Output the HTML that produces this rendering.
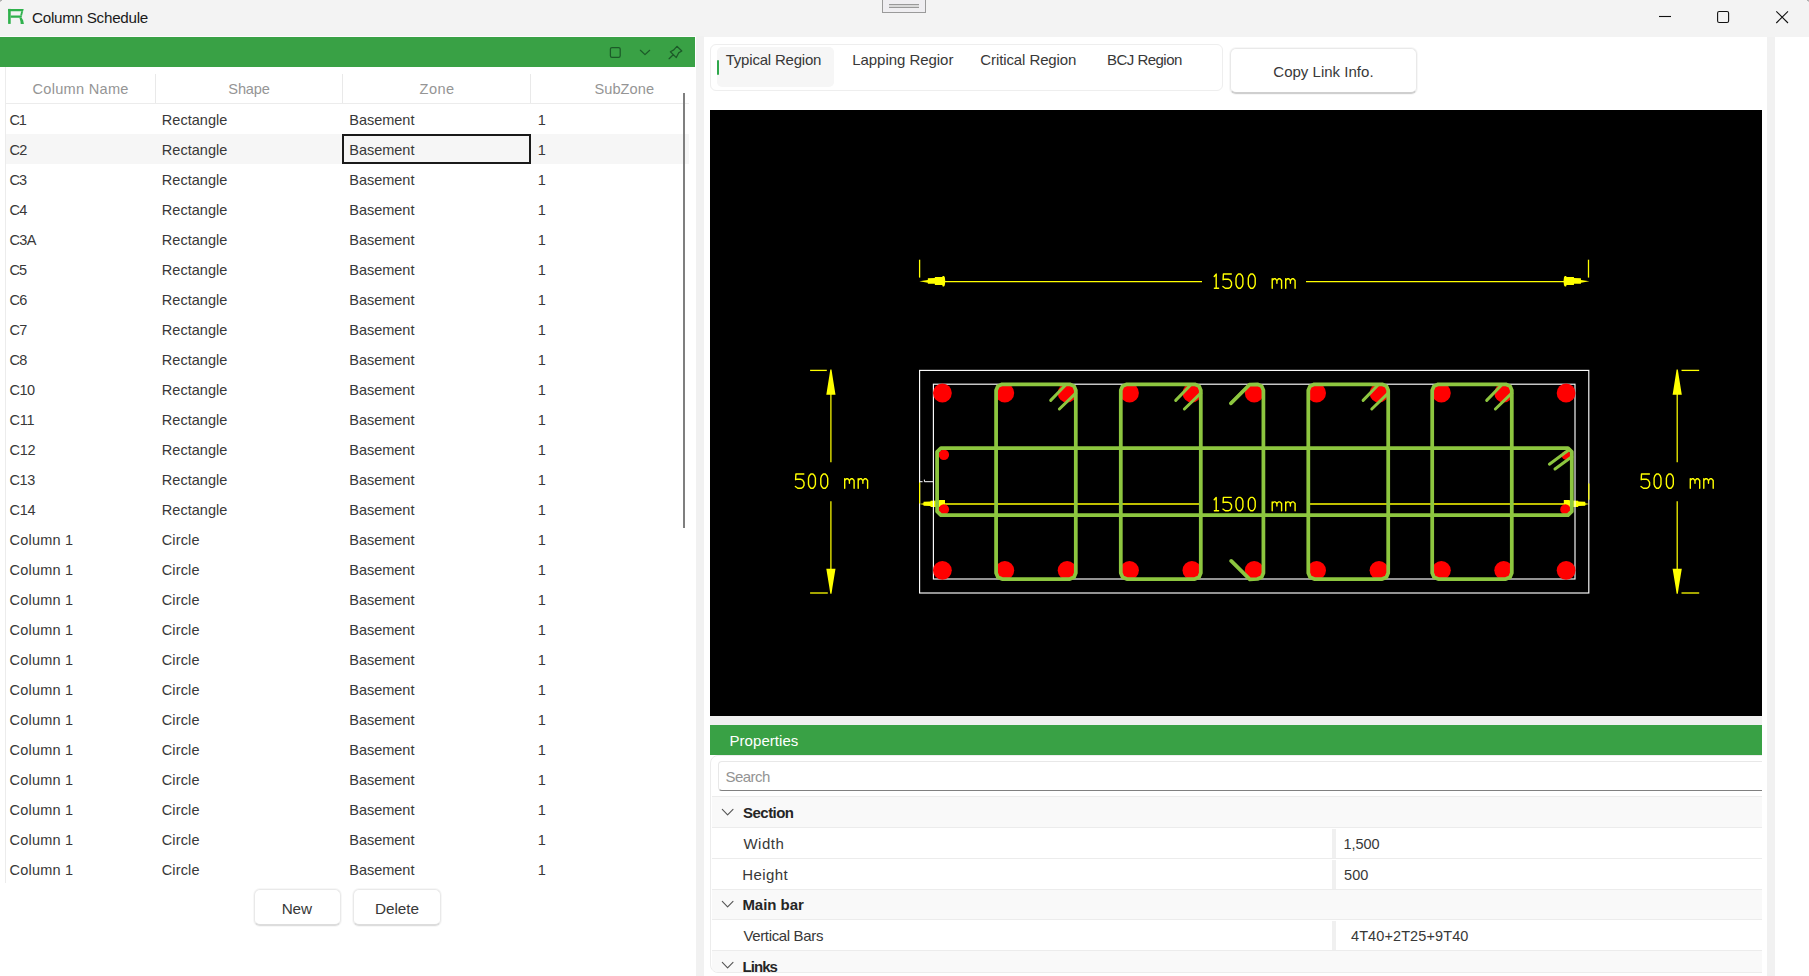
<!DOCTYPE html>
<html><head><meta charset="utf-8"><title>Column Schedule</title>
<style>
*{box-sizing:border-box;margin:0;padding:0}
html,body{width:1809px;height:976px;overflow:hidden;background:#fff;font-family:"Liberation Sans",sans-serif;font-size:14px;color:#1f1f1f}
.abs{position:absolute}
.tx{position:absolute;white-space:nowrap}
#title{left:0;top:0;width:1809px;height:37px;background:#f3f3f3}
#gbar{left:0;top:37px;width:695px;height:30px;background:#39a145}
#div1{left:696px;top:36px;width:8px;height:940px;background:#f1f1f1}
#div2{left:1767px;top:37px;width:8px;height:939px;background:#f1f1f1}
#cad{left:710px;top:110px;width:1052px;height:606px;background:#000}
#pband{left:710px;top:716px;width:1052px;height:9px;background:#f0f0f0}
#phead{left:710px;top:725px;width:1052px;height:30px;background:#39a145}
.vsep{width:1px;background:#e9e9e9;top:74px;height:29px}
.btn{background:#fff;border:1px solid #e9e9e9;border-bottom:2px solid #dddddd;border-radius:6px;box-shadow:0 0 0 1px #f7f7f7}
.prow{left:1px;width:1080px;border-top:1px solid #ececec}
.pg{background:#f9f9f9}
.psplit{left:621px;width:4px;background:#f0f0f0}
</style></head><body>
<div class="abs" id="title"></div>
<div class="abs" style="left:1807px;top:0;width:2px;height:1px;background:#b0b0b0"></div><div class="abs" style="left:1808px;top:1px;width:1px;height:1px;background:#c8c8c8"></div><div class="abs" style="left:0;top:0;width:2px;height:1px;background:#b0b0b0"></div><div class="abs" style="left:0;top:1px;width:1px;height:1px;background:#c8c8c8"></div>
<!-- logo -->
<svg class="abs" style="left:0;top:0" width="40" height="37" viewBox="0 0 40 37">
<g fill="#2fb14c"><polygon points="8.1,8.9 23.7,8.9 23.1,11.3 8.1,11.3"/><rect x="8.1" y="8.9" width="2.6" height="15"/>
<polygon points="10.7,15.4 22.1,15.4 21.5,17.8 10.7,17.8"/><polygon points="21.2,11.3 23.1,11.3 22.1,15.4 20.2,15.4"/>
<polygon points="19.4,17.8 21.7,17.8 23.2,20.6 23.9,23.9 20.7,23.9 20.4,21.2"/></g></svg>
<!-- top handle -->
<div class="abs" style="left:882px;top:-1px;width:44px;height:14px;background:#efeef1;border:1px solid #9a9a9a"></div>
<div class="abs" style="left:889px;top:4px;width:30px;height:4px;background:#d9d9d9;border-top:1px solid #999;border-bottom:1px solid #999"></div>
<!-- window buttons -->
<svg class="abs" style="left:1640px;top:0" width="169" height="37" viewBox="1640 0 169 37" fill="none" stroke="#111" stroke-width="1.1">
<line x1="1659" y1="16.5" x2="1671" y2="16.5"/>
<rect x="1717.6" y="11.5" width="11" height="11" rx="1.6"/>
<path d="M1776.3 11.3 L1788 23 M1788 11.3 L1776.3 23"/></svg>
<div class="abs" style="left:0;top:36px;width:696px;height:1px;background:#fcfcfc"></div>
<div class="abs" id="gbar"></div>
<svg class="abs" style="left:600px;top:37px" width="95" height="30" viewBox="600 37 95 30" fill="none" stroke="#1c5a28" stroke-width="1.25" stroke-linecap="round" stroke-linejoin="round">
<rect x="610.4" y="47.5" width="9.8" height="9.8" rx="1.6"/>
<path d="M640.4 50.3 L645 54.6 L649.7 50.3"/>
<path d="M676.9 46.3 L681.8 51 L678.6 52.9 L676.3 57.6 L670.4 51.7 L673.8 49.9 Z M673.2 54.7 L669.1 58.7"/></svg>
<!-- left table -->
<div class="abs" style="left:5px;top:67px;width:1px;height:816px;background:#ececec"></div>
<div class="abs" style="left:6px;top:103px;width:683px;height:1px;background:#ececec"></div>
<div class="abs vsep" style="left:155px"></div><div class="abs vsep" style="left:342px"></div><div class="abs vsep" style="left:530px"></div>
<div class="abs" style="left:6px;top:134px;width:683px;height:30px;background:#f6f6f6"></div>
<div class="abs" style="left:342px;top:134px;width:189px;height:30px;border:2px solid #1a1a1a"></div>
<div class="abs" style="left:683px;top:93px;width:2px;height:435px;background:#7f7f7f"></div>
<div class="abs btn" style="left:253.5px;top:889.3px;width:87px;height:36.5px"></div>
<div class="abs btn" style="left:353px;top:889.3px;width:87.5px;height:36.5px"></div>
<div class="abs" id="div1"></div>
<div class="abs" id="div2"></div>
<!-- tabs -->
<div class="abs" style="left:710px;top:44px;width:513px;height:47px;border:1px solid #eeeeee;border-radius:6px"></div>
<div class="abs" style="left:717px;top:47px;width:117px;height:40px;background:#f6f6f6;border-radius:5px"></div>
<div class="abs" style="left:717px;top:60px;width:2.4px;height:15px;background:#2fa84b;border-radius:1.2px"></div>
<div class="abs btn" style="left:1229.5px;top:47.5px;width:187.5px;height:46px;border-bottom-color:#cfcfcf"></div>
<div class="abs" id="cad"></div>
<svg class="abs" style="left:0;top:0" width="1809" height="976" viewBox="0 0 1809 976"><line x1="919.6" y1="259.7" x2="919.6" y2="277.6" stroke="#ffff00" stroke-width="1.3" />
<line x1="1588.5" y1="259.7" x2="1588.5" y2="277.6" stroke="#ffff00" stroke-width="1.3" />
<line x1="945" y1="281.6" x2="1202" y2="281.6" stroke="#ffff00" stroke-width="1.3" />
<line x1="1306" y1="281.6" x2="1564" y2="281.6" stroke="#ffff00" stroke-width="1.3" />
<polygon points="919.4,281.2 927.8,279.9 927.9,278.2 934.8,278.09999999999997 934.9,277.09999999999997 942.1999999999999,277.0 942.6999999999999,275.9 944.0,275.9 944.8,277.2 945.3,281.2 944.8,285.2 944.0,286.5 942.6999999999999,286.5 942.1999999999999,285.09999999999997 934.9,285.0 934.8,283.8 927.9,283.7 927.8,282.7" fill="#ffff00"/>
<polygon points="1589.4,281.2 1581.0,279.9 1580.9,278.2 1574.0,278.09999999999997 1573.9,277.09999999999997 1566.6000000000001,277.0 1566.1000000000001,275.9 1564.8000000000002,275.9 1564.0,277.2 1563.5,281.2 1564.0,285.2 1564.8000000000002,286.5 1566.1000000000001,286.5 1566.6000000000001,285.09999999999997 1573.9,285.0 1574.0,283.8 1580.9,283.7 1581.0,282.7" fill="#ffff00"/>
<path transform="translate(1210.20,273.50) scale(1,1)" d="M4 3 L6 .6 L6 14.8 M4.2 14.8 L8.4 14.8" stroke="#ffff00" stroke-width="1.4" fill="none" stroke-linejoin="round" stroke-linecap="round"/>
<path transform="translate(1222.50,273.50) scale(1,1)" d="M8.8 .5 L.9 .5 L.6 6.2 L2.2 5.7 L5.6 5.7 L7.6 6.6 L9 8.8 L9 11.8 L7.8 13.8 L6 14.8 L2.8 14.8 L.4 13" stroke="#ffff00" stroke-width="1.4" fill="none" stroke-linejoin="round" stroke-linecap="round"/>
<path transform="translate(1234.80,273.50) scale(1,1)" d="M3.6 .5 L5.7 .5 L7.3 2.2 L8.1 4.6 L8.1 10.7 L7.3 13.1 L5.7 14.8 L3.6 14.8 L2 13.1 L1.2 10.7 L1.2 4.6 L2 2.2 Z" stroke="#ffff00" stroke-width="1.4" fill="none" stroke-linejoin="round" stroke-linecap="round"/>
<path transform="translate(1247.10,273.50) scale(1,1)" d="M3.6 .5 L5.7 .5 L7.3 2.2 L8.1 4.6 L8.1 10.7 L7.3 13.1 L5.7 14.8 L3.6 14.8 L2 13.1 L1.2 10.7 L1.2 4.6 L2 2.2 Z" stroke="#ffff00" stroke-width="1.4" fill="none" stroke-linejoin="round" stroke-linecap="round"/>
<path transform="translate(1271.70,273.50) scale(1,1)" d="M.5 14.8 L.5 5.3 M.5 7 L2.2 5.3 L3.6 5.3 L5.2 7 L5.2 9.8 M5.2 7 L6.9 5.3 L8.3 5.3 L9.9 7 L9.9 14.8" stroke="#ffff00" stroke-width="1.4" fill="none" stroke-linejoin="round" stroke-linecap="round"/>
<path transform="translate(1285.20,273.50) scale(1,1)" d="M.5 14.8 L.5 5.3 M.5 7 L2.2 5.3 L3.6 5.3 L5.2 7 L5.2 9.8 M5.2 7 L6.9 5.3 L8.3 5.3 L9.9 7 L9.9 14.8" stroke="#ffff00" stroke-width="1.4" fill="none" stroke-linejoin="round" stroke-linecap="round"/>
<line x1="830.9" y1="394" x2="830.9" y2="462.3" stroke="#ffff00" stroke-width="1.25" />
<line x1="830.9" y1="501.2" x2="830.9" y2="570" stroke="#ffff00" stroke-width="1.25" />
<polygon points="830.3,369.4 831.5,369.4 832.5,376 835.5,394.8 826.3,394.8 829.3,376" fill="#ffff00"/>
<polygon points="830.3,593.8 831.5,593.8 832.5,587 835.5,568.8 826.3,568.8 829.3,587" fill="#ffff00"/>
<line x1="810.1" y1="370.4" x2="826.8" y2="370.4" stroke="#ffff00" stroke-width="1.3" />
<line x1="810.1" y1="593.0" x2="827.8" y2="593.0" stroke="#ffff00" stroke-width="1.3" />
<line x1="1677.2" y1="394" x2="1677.2" y2="462.3" stroke="#ffff00" stroke-width="1.25" />
<line x1="1677.2" y1="501.2" x2="1677.2" y2="570" stroke="#ffff00" stroke-width="1.25" />
<polygon points="1676.6000000000001,369.4 1677.8,369.4 1678.8,376 1681.8,394.8 1672.6000000000001,394.8 1675.6000000000001,376" fill="#ffff00"/>
<polygon points="1676.6000000000001,593.8 1677.8,593.8 1678.8,587 1681.8,568.8 1672.6000000000001,568.8 1675.6000000000001,587" fill="#ffff00"/>
<line x1="1681.5" y1="370.4" x2="1699.2" y2="370.4" stroke="#ffff00" stroke-width="1.3" />
<line x1="1681.5" y1="593.0" x2="1699.2" y2="593.0" stroke="#ffff00" stroke-width="1.3" />
<path transform="translate(795.00,473.50) scale(1,1)" d="M8.8 .5 L.9 .5 L.6 6.2 L2.2 5.7 L5.6 5.7 L7.6 6.6 L9 8.8 L9 11.8 L7.8 13.8 L6 14.8 L2.8 14.8 L.4 13" stroke="#ffff00" stroke-width="1.4" fill="none" stroke-linejoin="round" stroke-linecap="round"/>
<path transform="translate(807.30,473.50) scale(1,1)" d="M3.6 .5 L5.7 .5 L7.3 2.2 L8.1 4.6 L8.1 10.7 L7.3 13.1 L5.7 14.8 L3.6 14.8 L2 13.1 L1.2 10.7 L1.2 4.6 L2 2.2 Z" stroke="#ffff00" stroke-width="1.4" fill="none" stroke-linejoin="round" stroke-linecap="round"/>
<path transform="translate(819.60,473.50) scale(1,1)" d="M3.6 .5 L5.7 .5 L7.3 2.2 L8.1 4.6 L8.1 10.7 L7.3 13.1 L5.7 14.8 L3.6 14.8 L2 13.1 L1.2 10.7 L1.2 4.6 L2 2.2 Z" stroke="#ffff00" stroke-width="1.4" fill="none" stroke-linejoin="round" stroke-linecap="round"/>
<path transform="translate(844.20,473.50) scale(1,1)" d="M.5 14.8 L.5 5.3 M.5 7 L2.2 5.3 L3.6 5.3 L5.2 7 L5.2 9.8 M5.2 7 L6.9 5.3 L8.3 5.3 L9.9 7 L9.9 14.8" stroke="#ffff00" stroke-width="1.4" fill="none" stroke-linejoin="round" stroke-linecap="round"/>
<path transform="translate(857.70,473.50) scale(1,1)" d="M.5 14.8 L.5 5.3 M.5 7 L2.2 5.3 L3.6 5.3 L5.2 7 L5.2 9.8 M5.2 7 L6.9 5.3 L8.3 5.3 L9.9 7 L9.9 14.8" stroke="#ffff00" stroke-width="1.4" fill="none" stroke-linejoin="round" stroke-linecap="round"/>
<path transform="translate(1640.60,473.50) scale(1,1)" d="M8.8 .5 L.9 .5 L.6 6.2 L2.2 5.7 L5.6 5.7 L7.6 6.6 L9 8.8 L9 11.8 L7.8 13.8 L6 14.8 L2.8 14.8 L.4 13" stroke="#ffff00" stroke-width="1.4" fill="none" stroke-linejoin="round" stroke-linecap="round"/>
<path transform="translate(1652.90,473.50) scale(1,1)" d="M3.6 .5 L5.7 .5 L7.3 2.2 L8.1 4.6 L8.1 10.7 L7.3 13.1 L5.7 14.8 L3.6 14.8 L2 13.1 L1.2 10.7 L1.2 4.6 L2 2.2 Z" stroke="#ffff00" stroke-width="1.4" fill="none" stroke-linejoin="round" stroke-linecap="round"/>
<path transform="translate(1665.20,473.50) scale(1,1)" d="M3.6 .5 L5.7 .5 L7.3 2.2 L8.1 4.6 L8.1 10.7 L7.3 13.1 L5.7 14.8 L3.6 14.8 L2 13.1 L1.2 10.7 L1.2 4.6 L2 2.2 Z" stroke="#ffff00" stroke-width="1.4" fill="none" stroke-linejoin="round" stroke-linecap="round"/>
<path transform="translate(1689.80,473.50) scale(1,1)" d="M.5 14.8 L.5 5.3 M.5 7 L2.2 5.3 L3.6 5.3 L5.2 7 L5.2 9.8 M5.2 7 L6.9 5.3 L8.3 5.3 L9.9 7 L9.9 14.8" stroke="#ffff00" stroke-width="1.4" fill="none" stroke-linejoin="round" stroke-linecap="round"/>
<path transform="translate(1703.30,473.50) scale(1,1)" d="M.5 14.8 L.5 5.3 M.5 7 L2.2 5.3 L3.6 5.3 L5.2 7 L5.2 9.8 M5.2 7 L6.9 5.3 L8.3 5.3 L9.9 7 L9.9 14.8" stroke="#ffff00" stroke-width="1.4" fill="none" stroke-linejoin="round" stroke-linecap="round"/>
<line x1="945" y1="504.0" x2="1202" y2="504.0" stroke="#ffff00" stroke-width="1.45" />
<line x1="1309.5" y1="504.0" x2="1564" y2="504.0" stroke="#ffff00" stroke-width="1.45" />
<polygon points="919.4,504.0 923.4,503.2 923.6,501.8 930.4,501.6 930.6999999999999,500.8 938.9,500.6 939.4,500.1 945.0,500.1 945.0,504.0 945.0,507.0 938.9,507.0 930.6999999999999,506.9 930.4,506.0 923.6,505.8 923.4,504.8" fill="#ffff00"/>
<polygon points="1589.4,504.0 1585.4,503.2 1585.2,501.8 1578.4,501.6 1578.1000000000001,500.8 1569.9,500.6 1569.4,500.1 1563.8000000000002,500.1 1563.8000000000002,504.0 1563.8000000000002,507.0 1569.9,507.0 1578.1000000000001,506.9 1578.4,506.0 1585.2,505.8 1585.4,504.8" fill="#ffff00"/>
<path transform="translate(1210.20,496.90) scale(1,0.936)" d="M4 3 L6 .6 L6 14.8 M4.2 14.8 L8.4 14.8" stroke="#ffff00" stroke-width="1.4" fill="none" stroke-linejoin="round" stroke-linecap="round"/>
<path transform="translate(1222.50,496.90) scale(1,0.936)" d="M8.8 .5 L.9 .5 L.6 6.2 L2.2 5.7 L5.6 5.7 L7.6 6.6 L9 8.8 L9 11.8 L7.8 13.8 L6 14.8 L2.8 14.8 L.4 13" stroke="#ffff00" stroke-width="1.4" fill="none" stroke-linejoin="round" stroke-linecap="round"/>
<path transform="translate(1234.80,496.90) scale(1,0.936)" d="M3.6 .5 L5.7 .5 L7.3 2.2 L8.1 4.6 L8.1 10.7 L7.3 13.1 L5.7 14.8 L3.6 14.8 L2 13.1 L1.2 10.7 L1.2 4.6 L2 2.2 Z" stroke="#ffff00" stroke-width="1.4" fill="none" stroke-linejoin="round" stroke-linecap="round"/>
<path transform="translate(1247.10,496.90) scale(1,0.936)" d="M3.6 .5 L5.7 .5 L7.3 2.2 L8.1 4.6 L8.1 10.7 L7.3 13.1 L5.7 14.8 L3.6 14.8 L2 13.1 L1.2 10.7 L1.2 4.6 L2 2.2 Z" stroke="#ffff00" stroke-width="1.4" fill="none" stroke-linejoin="round" stroke-linecap="round"/>
<path transform="translate(1271.70,496.90) scale(1,0.936)" d="M.5 14.8 L.5 5.3 M.5 7 L2.2 5.3 L3.6 5.3 L5.2 7 L5.2 9.8 M5.2 7 L6.9 5.3 L8.3 5.3 L9.9 7 L9.9 14.8" stroke="#ffff00" stroke-width="1.4" fill="none" stroke-linejoin="round" stroke-linecap="round"/>
<path transform="translate(1285.20,496.90) scale(1,0.936)" d="M.5 14.8 L.5 5.3 M.5 7 L2.2 5.3 L3.6 5.3 L5.2 7 L5.2 9.8 M5.2 7 L6.9 5.3 L8.3 5.3 L9.9 7 L9.9 14.8" stroke="#ffff00" stroke-width="1.4" fill="none" stroke-linejoin="round" stroke-linecap="round"/>
<rect x="919.6" y="370.4" width="669.1999999999999" height="222.60000000000002" fill="none" stroke="#ffffff" stroke-width="1.15"/>
<rect x="933.4" y="384.2" width="641.6" height="194.8" fill="none" stroke="#ffffff" stroke-width="1.15"/>
<line x1="919.6" y1="481.7" x2="922.6" y2="481.7" stroke="#ffffff" stroke-width="1.0" />
<line x1="924.4" y1="481.7" x2="933.4" y2="481.7" stroke="#ffffff" stroke-width="1.0" />
<line x1="924.4" y1="479.6" x2="924.4" y2="481.7" stroke="#ffffff" stroke-width="1.0" />
<line x1="919.6" y1="482.4" x2="919.6" y2="503.6" stroke="#ffff00" stroke-width="1.2" />
<line x1="1588.8" y1="483.5" x2="1588.8" y2="499.8" stroke="#ffff00" stroke-width="1.2" />
<circle cx="942.4" cy="393.0" r="9.4" fill="#ff0000"/>
<circle cx="942.4" cy="570.3" r="9.4" fill="#ff0000"/>
<circle cx="1004.8" cy="393.0" r="9.4" fill="#ff0000"/>
<circle cx="1004.8" cy="570.3" r="9.4" fill="#ff0000"/>
<circle cx="1067.1" cy="393.0" r="9.4" fill="#ff0000"/>
<circle cx="1067.1" cy="570.3" r="9.4" fill="#ff0000"/>
<circle cx="1129.5" cy="393.0" r="9.4" fill="#ff0000"/>
<circle cx="1129.5" cy="570.3" r="9.4" fill="#ff0000"/>
<circle cx="1191.9" cy="393.0" r="9.4" fill="#ff0000"/>
<circle cx="1191.9" cy="570.3" r="9.4" fill="#ff0000"/>
<circle cx="1254.2" cy="393.0" r="9.4" fill="#ff0000"/>
<circle cx="1254.2" cy="570.3" r="9.4" fill="#ff0000"/>
<circle cx="1316.6" cy="393.0" r="9.4" fill="#ff0000"/>
<circle cx="1316.6" cy="570.3" r="9.4" fill="#ff0000"/>
<circle cx="1379.0" cy="393.0" r="9.4" fill="#ff0000"/>
<circle cx="1379.0" cy="570.3" r="9.4" fill="#ff0000"/>
<circle cx="1441.4" cy="393.0" r="9.4" fill="#ff0000"/>
<circle cx="1441.4" cy="570.3" r="9.4" fill="#ff0000"/>
<circle cx="1503.7" cy="393.0" r="9.4" fill="#ff0000"/>
<circle cx="1503.7" cy="570.3" r="9.4" fill="#ff0000"/>
<circle cx="1566.1" cy="393.0" r="9.4" fill="#ff0000"/>
<circle cx="1566.1" cy="570.3" r="9.4" fill="#ff0000"/>
<circle cx="943.9" cy="454.7" r="5.2" fill="#ff0000"/>
<circle cx="1566.2" cy="455.4" r="4.5" fill="#ff0000"/>
<circle cx="943.9" cy="509.4" r="5.2" fill="#ff0000"/>
<circle cx="1565.4" cy="509.4" r="5.2" fill="#ff0000"/>
<path d="M996.1 390.3 L997.9 386.1 L1002.1 384.3 L1069.8 384.3 L1074.0 386.1 L1075.8 390.3 L1075.8 573.0 L1074.0 577.2 L1069.8 579.0 L1002.1 579.0 L997.9 577.2 L996.1 573.0 Z" stroke="#8dc63f" stroke-width="3.75" fill="none" stroke-linejoin="round"/>
<path d="M1065.6 385.0 L1050.7 400.40000000000003" stroke="#8dc63f" stroke-width="3.0" fill="none" stroke-linecap="round"/>
<path d="M1075.8 393.2 L1059.3999999999999 409.0" stroke="#8dc63f" stroke-width="3.0" fill="none" stroke-linecap="round"/>
<path d="M1120.8 390.3 L1122.6 386.1 L1126.8 384.3 L1194.8 384.3 L1199.0 386.1 L1200.8 390.3 L1200.8 573.0 L1199.0 577.2 L1194.8 579.0 L1126.8 579.0 L1122.6 577.2 L1120.8 573.0 Z" stroke="#8dc63f" stroke-width="3.75" fill="none" stroke-linejoin="round"/>
<path d="M1190.6 385.0 L1175.7 400.40000000000003" stroke="#8dc63f" stroke-width="3.0" fill="none" stroke-linecap="round"/>
<path d="M1200.8 393.2 L1184.3999999999999 409.0" stroke="#8dc63f" stroke-width="3.0" fill="none" stroke-linecap="round"/>
<path d="M1308.3 390.3 L1310.1 386.1 L1314.3 384.3 L1382.2 384.3 L1386.4 386.1 L1388.2 390.3 L1388.2 573.0 L1386.4 577.2 L1382.2 579.0 L1314.3 579.0 L1310.1 577.2 L1308.3 573.0 Z" stroke="#8dc63f" stroke-width="3.75" fill="none" stroke-linejoin="round"/>
<path d="M1378.0 385.0 L1363.1000000000001 400.40000000000003" stroke="#8dc63f" stroke-width="3.0" fill="none" stroke-linecap="round"/>
<path d="M1388.2 393.2 L1371.8 409.0" stroke="#8dc63f" stroke-width="3.0" fill="none" stroke-linecap="round"/>
<path d="M1432.2 390.3 L1434.0 386.1 L1438.2 384.3 L1505.8 384.3 L1510.0 386.1 L1511.8 390.3 L1511.8 573.0 L1510.0 577.2 L1505.8 579.0 L1438.2 579.0 L1434.0 577.2 L1432.2 573.0 Z" stroke="#8dc63f" stroke-width="3.75" fill="none" stroke-linejoin="round"/>
<path d="M1501.6 385.0 L1486.7 400.40000000000003" stroke="#8dc63f" stroke-width="3.0" fill="none" stroke-linecap="round"/>
<path d="M1511.8 393.2 L1495.3999999999999 409.0" stroke="#8dc63f" stroke-width="3.0" fill="none" stroke-linecap="round"/>
<path d="M1231.0 403.3 L1249.5 384.7 L1257.4 384.3 L1261.6000000000001 386.1 L1263.4 390.3 L1263.4 573.0 L1261.6000000000001 577.2 L1257.4 579.0 L1249.8 579.3 L1231.2 560.9" stroke="#8dc63f" stroke-width="3.75" fill="none" stroke-linejoin="round" stroke-linecap="round"/>
<path d="M1231.0 403.3 L1249.5 384.7" stroke="#8dc63f" stroke-width="3.0" fill="none" stroke-linecap="round"/>
<path d="M937.1 451.8 L940.9 448.0 L1568.0 448.0 L1571.8 451.8 L1571.8 511.40000000000003 L1568.0 515.2 L940.9 515.2 L937.1 511.40000000000003 Z" stroke="#8dc63f" stroke-width="3.75" fill="none" stroke-linejoin="round"/>
<path d="M1568.0 450.5 L1549.4 464.2" stroke="#8dc63f" stroke-width="3.0" fill="none" stroke-linecap="round"/>
<path d="M1571.8 456.8 L1555.0 469.0" stroke="#8dc63f" stroke-width="3.0" fill="none" stroke-linecap="round"/></svg>
<div class="abs" id="pband"></div>
<div class="abs" id="phead"></div>
<!-- properties -->
<div class="abs" style="left:710px;top:755px;width:1052px;height:221px;overflow:hidden">
<div class="abs" style="left:0;top:0;width:1080px;height:217.5px;border:1px solid #ececec;border-radius:8px;overflow:hidden">
<div class="abs prow pg" style="top:40px;height:31px"></div>
<div class="abs prow" style="top:71px;height:31px"></div>
<div class="abs prow" style="top:102px;height:31px"></div>
<div class="abs prow pg" style="top:133px;height:31px"></div>
<div class="abs prow" style="top:163px;height:31px"></div>
<div class="abs prow pg" style="top:194px;height:31px"></div>
<div class="abs psplit" style="top:73px;height:29px"></div>
<div class="abs psplit" style="top:104px;height:29px"></div>
<div class="abs psplit" style="top:165px;height:29px"></div>
</div>
<div class="abs" style="left:7.5px;top:6px;width:1070px;height:30px;border:1px solid #e8e8e8;border-bottom:1px solid #808080;border-radius:4px"></div>
</div>
<svg class="abs" style="left:715px;top:800px" width="30" height="176" viewBox="715 800 30 176" fill="none" stroke="#555" stroke-width="1.1" stroke-linecap="round" stroke-linejoin="round">
<path d="M722.3 809.4 L727.6 814.8 L733 809.4"/><path d="M722.3 901.4 L727.6 906.8 L733 901.4"/><path d="M722.3 962.4 L727.6 967.8 L733 962.4"/></svg>
<div class="tx" style="left:32.00px;top:7.00px;font-size:15.2px;line-height:21px;letter-spacing:-0.259px;color:#1a1a1a">Column Schedule</div>
<div class="tx" style="left:32.50px;top:79.00px;font-size:14.6px;line-height:20px;letter-spacing:0.271px;color:#959595">Column Name</div>
<div class="tx" style="left:228.30px;top:79.00px;font-size:14.6px;line-height:20px;letter-spacing:-0.149px;color:#959595">Shape</div>
<div class="tx" style="left:419.60px;top:79.00px;font-size:14.6px;line-height:20px;letter-spacing:0.381px;color:#959595">Zone</div>
<div class="tx" style="left:594.50px;top:79.00px;font-size:14.6px;line-height:20px;letter-spacing:0.044px;color:#959595">SubZone</div>
<div class="tx" style="left:9.50px;top:110.00px;font-size:14.5px;line-height:20px;letter-spacing:-1.200px;color:#383838">C1</div>
<div class="tx" style="left:161.80px;top:110.00px;font-size:14.5px;line-height:20px;letter-spacing:0.034px;color:#383838">Rectangle</div>
<div class="tx" style="left:349.30px;top:110.00px;font-size:14.5px;line-height:20px;letter-spacing:-0.022px;color:#383838">Basement</div>
<div class="tx" style="left:537.70px;top:110.00px;font-size:14.5px;line-height:20px;letter-spacing:0.000px;color:#383838">1</div>
<div class="tx" style="left:9.50px;top:140.00px;font-size:14.5px;line-height:20px;letter-spacing:-0.671px;color:#383838">C2</div>
<div class="tx" style="left:161.80px;top:140.00px;font-size:14.5px;line-height:20px;letter-spacing:0.034px;color:#383838">Rectangle</div>
<div class="tx" style="left:349.30px;top:140.00px;font-size:14.5px;line-height:20px;letter-spacing:-0.022px;color:#383838">Basement</div>
<div class="tx" style="left:537.70px;top:140.00px;font-size:14.5px;line-height:20px;letter-spacing:0.000px;color:#383838">1</div>
<div class="tx" style="left:9.50px;top:170.00px;font-size:14.5px;line-height:20px;letter-spacing:-0.871px;color:#383838">C3</div>
<div class="tx" style="left:161.80px;top:170.00px;font-size:14.5px;line-height:20px;letter-spacing:0.034px;color:#383838">Rectangle</div>
<div class="tx" style="left:349.30px;top:170.00px;font-size:14.5px;line-height:20px;letter-spacing:-0.022px;color:#383838">Basement</div>
<div class="tx" style="left:537.70px;top:170.00px;font-size:14.5px;line-height:20px;letter-spacing:0.000px;color:#383838">1</div>
<div class="tx" style="left:9.50px;top:200.00px;font-size:14.5px;line-height:20px;letter-spacing:-0.671px;color:#383838">C4</div>
<div class="tx" style="left:161.80px;top:200.00px;font-size:14.5px;line-height:20px;letter-spacing:0.034px;color:#383838">Rectangle</div>
<div class="tx" style="left:349.30px;top:200.00px;font-size:14.5px;line-height:20px;letter-spacing:-0.022px;color:#383838">Basement</div>
<div class="tx" style="left:537.70px;top:200.00px;font-size:14.5px;line-height:20px;letter-spacing:0.000px;color:#383838">1</div>
<div class="tx" style="left:9.50px;top:230.00px;font-size:14.5px;line-height:20px;letter-spacing:-0.668px;color:#383838">C3A</div>
<div class="tx" style="left:161.80px;top:230.00px;font-size:14.5px;line-height:20px;letter-spacing:0.034px;color:#383838">Rectangle</div>
<div class="tx" style="left:349.30px;top:230.00px;font-size:14.5px;line-height:20px;letter-spacing:-0.022px;color:#383838">Basement</div>
<div class="tx" style="left:537.70px;top:230.00px;font-size:14.5px;line-height:20px;letter-spacing:0.000px;color:#383838">1</div>
<div class="tx" style="left:9.50px;top:260.00px;font-size:14.5px;line-height:20px;letter-spacing:-0.871px;color:#383838">C5</div>
<div class="tx" style="left:161.80px;top:260.00px;font-size:14.5px;line-height:20px;letter-spacing:0.034px;color:#383838">Rectangle</div>
<div class="tx" style="left:349.30px;top:260.00px;font-size:14.5px;line-height:20px;letter-spacing:-0.022px;color:#383838">Basement</div>
<div class="tx" style="left:537.70px;top:260.00px;font-size:14.5px;line-height:20px;letter-spacing:0.000px;color:#383838">1</div>
<div class="tx" style="left:9.50px;top:290.00px;font-size:14.5px;line-height:20px;letter-spacing:-0.671px;color:#383838">C6</div>
<div class="tx" style="left:161.80px;top:290.00px;font-size:14.5px;line-height:20px;letter-spacing:0.034px;color:#383838">Rectangle</div>
<div class="tx" style="left:349.30px;top:290.00px;font-size:14.5px;line-height:20px;letter-spacing:-0.022px;color:#383838">Basement</div>
<div class="tx" style="left:537.70px;top:290.00px;font-size:14.5px;line-height:20px;letter-spacing:0.000px;color:#383838">1</div>
<div class="tx" style="left:9.50px;top:320.00px;font-size:14.5px;line-height:20px;letter-spacing:-0.771px;color:#383838">C7</div>
<div class="tx" style="left:161.80px;top:320.00px;font-size:14.5px;line-height:20px;letter-spacing:0.034px;color:#383838">Rectangle</div>
<div class="tx" style="left:349.30px;top:320.00px;font-size:14.5px;line-height:20px;letter-spacing:-0.022px;color:#383838">Basement</div>
<div class="tx" style="left:537.70px;top:320.00px;font-size:14.5px;line-height:20px;letter-spacing:0.000px;color:#383838">1</div>
<div class="tx" style="left:9.50px;top:350.00px;font-size:14.5px;line-height:20px;letter-spacing:-0.671px;color:#383838">C8</div>
<div class="tx" style="left:161.80px;top:350.00px;font-size:14.5px;line-height:20px;letter-spacing:0.034px;color:#383838">Rectangle</div>
<div class="tx" style="left:349.30px;top:350.00px;font-size:14.5px;line-height:20px;letter-spacing:-0.022px;color:#383838">Basement</div>
<div class="tx" style="left:537.70px;top:350.00px;font-size:14.5px;line-height:20px;letter-spacing:0.000px;color:#383838">1</div>
<div class="tx" style="left:9.50px;top:380.00px;font-size:14.5px;line-height:20px;letter-spacing:-0.468px;color:#383838">C10</div>
<div class="tx" style="left:161.80px;top:380.00px;font-size:14.5px;line-height:20px;letter-spacing:0.034px;color:#383838">Rectangle</div>
<div class="tx" style="left:349.30px;top:380.00px;font-size:14.5px;line-height:20px;letter-spacing:-0.022px;color:#383838">Basement</div>
<div class="tx" style="left:537.70px;top:380.00px;font-size:14.5px;line-height:20px;letter-spacing:0.000px;color:#383838">1</div>
<div class="tx" style="left:9.50px;top:410.00px;font-size:14.5px;line-height:20px;letter-spacing:-0.280px;color:#383838">C11</div>
<div class="tx" style="left:161.80px;top:410.00px;font-size:14.5px;line-height:20px;letter-spacing:0.034px;color:#383838">Rectangle</div>
<div class="tx" style="left:349.30px;top:410.00px;font-size:14.5px;line-height:20px;letter-spacing:-0.022px;color:#383838">Basement</div>
<div class="tx" style="left:537.70px;top:410.00px;font-size:14.5px;line-height:20px;letter-spacing:0.000px;color:#383838">1</div>
<div class="tx" style="left:9.50px;top:440.00px;font-size:14.5px;line-height:20px;letter-spacing:-0.318px;color:#383838">C12</div>
<div class="tx" style="left:161.80px;top:440.00px;font-size:14.5px;line-height:20px;letter-spacing:0.034px;color:#383838">Rectangle</div>
<div class="tx" style="left:349.30px;top:440.00px;font-size:14.5px;line-height:20px;letter-spacing:-0.022px;color:#383838">Basement</div>
<div class="tx" style="left:537.70px;top:440.00px;font-size:14.5px;line-height:20px;letter-spacing:0.000px;color:#383838">1</div>
<div class="tx" style="left:9.50px;top:470.00px;font-size:14.5px;line-height:20px;letter-spacing:-0.418px;color:#383838">C13</div>
<div class="tx" style="left:161.80px;top:470.00px;font-size:14.5px;line-height:20px;letter-spacing:0.034px;color:#383838">Rectangle</div>
<div class="tx" style="left:349.30px;top:470.00px;font-size:14.5px;line-height:20px;letter-spacing:-0.022px;color:#383838">Basement</div>
<div class="tx" style="left:537.70px;top:470.00px;font-size:14.5px;line-height:20px;letter-spacing:0.000px;color:#383838">1</div>
<div class="tx" style="left:9.50px;top:500.00px;font-size:14.5px;line-height:20px;letter-spacing:-0.268px;color:#383838">C14</div>
<div class="tx" style="left:161.80px;top:500.00px;font-size:14.5px;line-height:20px;letter-spacing:0.034px;color:#383838">Rectangle</div>
<div class="tx" style="left:349.30px;top:500.00px;font-size:14.5px;line-height:20px;letter-spacing:-0.022px;color:#383838">Basement</div>
<div class="tx" style="left:537.70px;top:500.00px;font-size:14.5px;line-height:20px;letter-spacing:0.000px;color:#383838">1</div>
<div class="tx" style="left:9.50px;top:530.00px;font-size:14.5px;line-height:20px;letter-spacing:0.215px;color:#383838">Column 1</div>
<div class="tx" style="left:161.70px;top:530.00px;font-size:14.5px;line-height:20px;letter-spacing:0.141px;color:#383838">Circle</div>
<div class="tx" style="left:349.30px;top:530.00px;font-size:14.5px;line-height:20px;letter-spacing:-0.022px;color:#383838">Basement</div>
<div class="tx" style="left:537.70px;top:530.00px;font-size:14.5px;line-height:20px;letter-spacing:0.000px;color:#383838">1</div>
<div class="tx" style="left:9.50px;top:560.00px;font-size:14.5px;line-height:20px;letter-spacing:0.215px;color:#383838">Column 1</div>
<div class="tx" style="left:161.70px;top:560.00px;font-size:14.5px;line-height:20px;letter-spacing:0.141px;color:#383838">Circle</div>
<div class="tx" style="left:349.30px;top:560.00px;font-size:14.5px;line-height:20px;letter-spacing:-0.022px;color:#383838">Basement</div>
<div class="tx" style="left:537.70px;top:560.00px;font-size:14.5px;line-height:20px;letter-spacing:0.000px;color:#383838">1</div>
<div class="tx" style="left:9.50px;top:590.00px;font-size:14.5px;line-height:20px;letter-spacing:0.215px;color:#383838">Column 1</div>
<div class="tx" style="left:161.70px;top:590.00px;font-size:14.5px;line-height:20px;letter-spacing:0.141px;color:#383838">Circle</div>
<div class="tx" style="left:349.30px;top:590.00px;font-size:14.5px;line-height:20px;letter-spacing:-0.022px;color:#383838">Basement</div>
<div class="tx" style="left:537.70px;top:590.00px;font-size:14.5px;line-height:20px;letter-spacing:0.000px;color:#383838">1</div>
<div class="tx" style="left:9.50px;top:620.00px;font-size:14.5px;line-height:20px;letter-spacing:0.215px;color:#383838">Column 1</div>
<div class="tx" style="left:161.70px;top:620.00px;font-size:14.5px;line-height:20px;letter-spacing:0.141px;color:#383838">Circle</div>
<div class="tx" style="left:349.30px;top:620.00px;font-size:14.5px;line-height:20px;letter-spacing:-0.022px;color:#383838">Basement</div>
<div class="tx" style="left:537.70px;top:620.00px;font-size:14.5px;line-height:20px;letter-spacing:0.000px;color:#383838">1</div>
<div class="tx" style="left:9.50px;top:650.00px;font-size:14.5px;line-height:20px;letter-spacing:0.215px;color:#383838">Column 1</div>
<div class="tx" style="left:161.70px;top:650.00px;font-size:14.5px;line-height:20px;letter-spacing:0.141px;color:#383838">Circle</div>
<div class="tx" style="left:349.30px;top:650.00px;font-size:14.5px;line-height:20px;letter-spacing:-0.022px;color:#383838">Basement</div>
<div class="tx" style="left:537.70px;top:650.00px;font-size:14.5px;line-height:20px;letter-spacing:0.000px;color:#383838">1</div>
<div class="tx" style="left:9.50px;top:680.00px;font-size:14.5px;line-height:20px;letter-spacing:0.215px;color:#383838">Column 1</div>
<div class="tx" style="left:161.70px;top:680.00px;font-size:14.5px;line-height:20px;letter-spacing:0.141px;color:#383838">Circle</div>
<div class="tx" style="left:349.30px;top:680.00px;font-size:14.5px;line-height:20px;letter-spacing:-0.022px;color:#383838">Basement</div>
<div class="tx" style="left:537.70px;top:680.00px;font-size:14.5px;line-height:20px;letter-spacing:0.000px;color:#383838">1</div>
<div class="tx" style="left:9.50px;top:710.00px;font-size:14.5px;line-height:20px;letter-spacing:0.215px;color:#383838">Column 1</div>
<div class="tx" style="left:161.70px;top:710.00px;font-size:14.5px;line-height:20px;letter-spacing:0.141px;color:#383838">Circle</div>
<div class="tx" style="left:349.30px;top:710.00px;font-size:14.5px;line-height:20px;letter-spacing:-0.022px;color:#383838">Basement</div>
<div class="tx" style="left:537.70px;top:710.00px;font-size:14.5px;line-height:20px;letter-spacing:0.000px;color:#383838">1</div>
<div class="tx" style="left:9.50px;top:740.00px;font-size:14.5px;line-height:20px;letter-spacing:0.215px;color:#383838">Column 1</div>
<div class="tx" style="left:161.70px;top:740.00px;font-size:14.5px;line-height:20px;letter-spacing:0.141px;color:#383838">Circle</div>
<div class="tx" style="left:349.30px;top:740.00px;font-size:14.5px;line-height:20px;letter-spacing:-0.022px;color:#383838">Basement</div>
<div class="tx" style="left:537.70px;top:740.00px;font-size:14.5px;line-height:20px;letter-spacing:0.000px;color:#383838">1</div>
<div class="tx" style="left:9.50px;top:770.00px;font-size:14.5px;line-height:20px;letter-spacing:0.215px;color:#383838">Column 1</div>
<div class="tx" style="left:161.70px;top:770.00px;font-size:14.5px;line-height:20px;letter-spacing:0.141px;color:#383838">Circle</div>
<div class="tx" style="left:349.30px;top:770.00px;font-size:14.5px;line-height:20px;letter-spacing:-0.022px;color:#383838">Basement</div>
<div class="tx" style="left:537.70px;top:770.00px;font-size:14.5px;line-height:20px;letter-spacing:0.000px;color:#383838">1</div>
<div class="tx" style="left:9.50px;top:800.00px;font-size:14.5px;line-height:20px;letter-spacing:0.215px;color:#383838">Column 1</div>
<div class="tx" style="left:161.70px;top:800.00px;font-size:14.5px;line-height:20px;letter-spacing:0.141px;color:#383838">Circle</div>
<div class="tx" style="left:349.30px;top:800.00px;font-size:14.5px;line-height:20px;letter-spacing:-0.022px;color:#383838">Basement</div>
<div class="tx" style="left:537.70px;top:800.00px;font-size:14.5px;line-height:20px;letter-spacing:0.000px;color:#383838">1</div>
<div class="tx" style="left:9.50px;top:830.00px;font-size:14.5px;line-height:20px;letter-spacing:0.215px;color:#383838">Column 1</div>
<div class="tx" style="left:161.70px;top:830.00px;font-size:14.5px;line-height:20px;letter-spacing:0.141px;color:#383838">Circle</div>
<div class="tx" style="left:349.30px;top:830.00px;font-size:14.5px;line-height:20px;letter-spacing:-0.022px;color:#383838">Basement</div>
<div class="tx" style="left:537.70px;top:830.00px;font-size:14.5px;line-height:20px;letter-spacing:0.000px;color:#383838">1</div>
<div class="tx" style="left:9.50px;top:860.00px;font-size:14.5px;line-height:20px;letter-spacing:0.215px;color:#383838">Column 1</div>
<div class="tx" style="left:161.70px;top:860.00px;font-size:14.5px;line-height:20px;letter-spacing:0.141px;color:#383838">Circle</div>
<div class="tx" style="left:349.30px;top:860.00px;font-size:14.5px;line-height:20px;letter-spacing:-0.022px;color:#383838">Basement</div>
<div class="tx" style="left:537.70px;top:860.00px;font-size:14.5px;line-height:20px;letter-spacing:0.000px;color:#383838">1</div>
<div class="tx" style="left:281.80px;top:898.00px;font-size:15.3px;line-height:21px;letter-spacing:-0.229px;color:#383838">New</div>
<div class="tx" style="left:375.00px;top:898.00px;font-size:15.3px;line-height:21px;letter-spacing:-0.043px;color:#383838">Delete</div>
<div class="tx" style="left:725.70px;top:49.00px;font-size:15px;line-height:21px;letter-spacing:-0.203px;color:#383838">Typical Region</div>
<div class="tx" style="left:852.20px;top:49.00px;font-size:15px;line-height:21px;letter-spacing:-0.042px;color:#383838">Lapping Regior</div>
<div class="tx" style="left:980.30px;top:49.00px;font-size:15px;line-height:21px;letter-spacing:-0.100px;color:#383838">Critical Region</div>
<div class="tx" style="left:1107.00px;top:49.00px;font-size:15px;line-height:21px;letter-spacing:-0.522px;color:#383838">BCJ Region</div>
<div class="tx" style="left:1273.30px;top:61.00px;font-size:15px;line-height:21px;letter-spacing:0.015px;color:#383838">Copy Link Info.</div>
<div class="tx" style="left:729.50px;top:730.00px;font-size:15px;line-height:21px;letter-spacing:0.048px;color:#fff">Properties</div>
<div class="tx" style="left:725.40px;top:766.00px;font-size:15px;line-height:21px;letter-spacing:-0.517px;color:#939393">Search</div>
<div class="tx" style="left:743.10px;top:802.00px;font-size:15px;line-height:21px;letter-spacing:-0.552px;color:#262626;font-weight:bold">Section</div>
<div class="tx" style="left:743.40px;top:833.00px;font-size:15px;line-height:21px;letter-spacing:0.550px;color:#383838">Width</div>
<div class="tx" style="left:742.20px;top:864.00px;font-size:15px;line-height:21px;letter-spacing:0.402px;color:#383838">Height</div>
<div class="tx" style="left:742.40px;top:894.00px;font-size:15px;line-height:21px;letter-spacing:-0.034px;color:#262626;font-weight:bold">Main bar</div>
<div class="tx" style="left:743.40px;top:925.00px;font-size:15px;line-height:21px;letter-spacing:-0.350px;color:#383838">Vertical Bars</div>
<div class="tx" style="left:742.40px;top:956.00px;font-size:15px;line-height:21px;letter-spacing:-0.909px;color:#262626;font-weight:bold">Links</div>
<div class="tx" style="left:1343.50px;top:834.00px;font-size:14.5px;line-height:20px;letter-spacing:-0.080px;color:#383838">1,500</div>
<div class="tx" style="left:1344.10px;top:865.00px;font-size:14.5px;line-height:20px;letter-spacing:-0.014px;color:#383838">500</div>
<div class="tx" style="left:1351.00px;top:926.00px;font-size:14.5px;line-height:20px;letter-spacing:0.098px;color:#383838">4T40+2T25+9T40</div>
</body></html>
